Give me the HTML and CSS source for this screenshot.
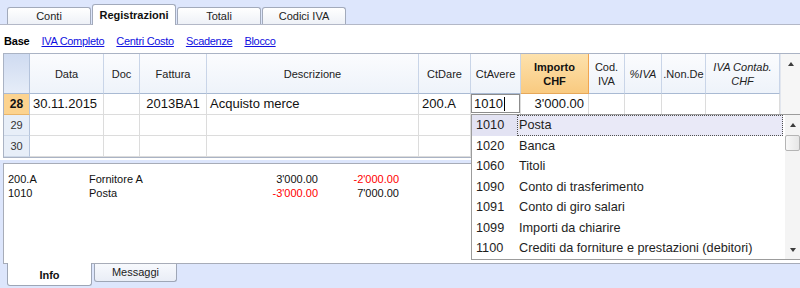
FILE: index.html
```html
<!DOCTYPE html>
<html>
<head>
<meta charset="utf-8">
<title>Registrazioni</title>
<link rel="stylesheet" href="styles.css">
</head>
<body>
<div class="app">
  <div class="tabs">
    <div class="tab">Conti</div>
    <div class="tab active">Registrazioni</div>
    <div class="tab">Totali</div>
    <div class="tab">Codici IVA</div>
  </div>

  <div class="main">
    <div class="views">
      <span class="view-cur">Base</span>
      <a class="view-link">IVA Completo</a>
      <a class="view-link">Centri Costo</a>
      <a class="view-link">Scadenze</a>
      <a class="view-link">Blocco</a>
    </div>

    <div class="gridwrap">
      <div class="grid">
        <div class="hc corner"></div>
        <div class="hc">Data</div>
        <div class="hc">Doc</div>
        <div class="hc">Fattura</div>
        <div class="hc">Descrizione</div>
        <div class="hc">CtDare</div>
        <div class="hc">CtAvere</div>
        <div class="hc hc-sel">Importo<br>CHF</div>
        <div class="hc">Cod.<br>IVA</div>
        <div class="hc it">%IVA</div>
        <div class="hc">.Non.De</div>
        <div class="hc it">IVA Contab.<br>CHF</div>

        <div class="rn rn-sel">28</div>
        <div class="c">30.11.2015</div>
        <div class="c"></div>
        <div class="c ctr">2013BA1</div>
        <div class="c">Acquisto merce</div>
        <div class="c">200.A</div>
        <div class="c edit-cell"><div class="edit">1010<span class="caret"></span></div></div>
        <div class="c num">3'000.00</div>
        <div class="c"></div>
        <div class="c"></div>
        <div class="c"></div>
        <div class="c"></div>

        <div class="rn">29</div>
        <div class="c"></div><div class="c"></div><div class="c"></div><div class="c"></div><div class="c"></div>
        <div class="c"></div><div class="c"></div><div class="c"></div><div class="c"></div><div class="c"></div><div class="c"></div>

        <div class="rn">30</div>
        <div class="c"></div><div class="c"></div><div class="c"></div><div class="c"></div><div class="c"></div>
        <div class="c"></div><div class="c"></div><div class="c"></div><div class="c"></div><div class="c"></div><div class="c"></div>
      </div>
      <div class="vscroll"><span class="arr-up"></span></div>
    </div>
  </div>

  <div class="info">
    <div class="info-row">
      <span>200.A</span><span>Fornitore A</span><span class="amt">3'000.00</span><span class="amt neg">-2'000.00</span>
    </div>
    <div class="info-row">
      <span>1010</span><span>Posta</span><span class="amt neg">-3'000.00</span><span class="amt">7'000.00</span>
    </div>
  </div>

  <div class="btabs">
    <div class="btab active">Info</div>
    <div class="btab">Messaggi</div>
  </div>

  <div class="dropdown">
    <div class="dd-list">
      <div class="dd-item sel"><span class="dd-code">1010</span><span class="dd-name">Posta</span></div>
      <div class="dd-item"><span class="dd-code">1020</span><span class="dd-name">Banca</span></div>
      <div class="dd-item"><span class="dd-code">1060</span><span class="dd-name">Titoli</span></div>
      <div class="dd-item"><span class="dd-code">1090</span><span class="dd-name">Conto di trasferimento</span></div>
      <div class="dd-item"><span class="dd-code">1091</span><span class="dd-name">Conto di giro salari</span></div>
      <div class="dd-item"><span class="dd-code">1099</span><span class="dd-name">Importi da chiarire</span></div>
      <div class="dd-item"><span class="dd-code">1100</span><span class="dd-name">Crediti da forniture e prestazioni (debitori)</span></div>
    </div>
    <div class="dd-scroll">
      <div class="sb-btn"><span class="arr-up"></span></div>
      <div class="sb-thumb"></div>
      <div class="sb-space"></div>
      <div class="sb-btn sb-btn-down"><span class="arr-down"></span></div>
    </div>
  </div>
</div>
</body>
</html>
```

FILE: styles.css
```css
* { box-sizing: border-box; margin: 0; padding: 0; }

html, body { width: 800px; height: 288px; overflow: hidden; }

body {
  background: #dde6fc;
  font-family: "Liberation Sans", Arial, sans-serif;
  font-size: 11px;
  color: #1c1c1c;
}

.app { position: relative; width: 800px; height: 288px; }

/* top tabs */
.tabs {
  display: flex;
  align-items: flex-end;
  gap: 1px;
  height: 25px;
  padding-left: 7px;
  border-bottom: 1px solid #b3b8c7;
}
.tab {
  width: 84px;
  height: 17px;
  border: 1px solid #a2aabb;
  border-bottom: none;
  border-radius: 3px 3px 0 0;
  background: linear-gradient(#ffffff, #eef1f7);
  text-align: center;
  line-height: 17px;
  color: #222;
}
.tab.active {
  position: relative;
  height: 21px;
  margin-bottom: -1px;
  background: #fff;
  font-weight: bold;
  line-height: 21px;
  color: #111;
}

/* main white area */
.main { background: #fff; height: 135px; }

.views {
  display: flex;
  gap: 12px;
  height: 28px;
  padding: 10px 0 0 4px;
  line-height: 13px;
}
.view-cur { font-weight: bold; color: #000; letter-spacing: -0.2px; }
.view-link { color: #1010e0; text-decoration: underline; letter-spacing: -0.3px; }

/* data grid */
.gridwrap {
  display: flex;
  width: 797px;
  margin-left: 3px;
  border: 1px solid #aab3c4;
  border-right: none;
}
.grid {
  display: grid;
  grid-template-columns: 26px 74px 36px 67px 212px 52px 50px 68px 36px 37px 44px 74px;
  grid-template-rows: 40px 21px 21px 21px;
}
.hc {
  display: flex;
  align-items: center;
  justify-content: center;
  text-align: center;
  line-height: 14px;
  background: linear-gradient(#fbfcfe, #eef3fa);
  border-right: 1px solid #c9d5e8;
  border-bottom: 1px solid #a9bad3;
  color: #222;
}
.hc.corner { background: linear-gradient(#cfdbf1, #e6edf8); border-right-color: #b4c3db; }
.hc.it { font-style: italic; }
.hc.hc-sel {
  background: linear-gradient(#fde2ad, #f9ca80);
  border-right: 1px solid #f1a550;
  border-bottom-color: #e6a85a;
  font-weight: bold;
  color: #111;
}
.rn {
  display: flex;
  align-items: center;
  justify-content: center;
  background: #e7eef8;
  border-right: 1px solid #b6c5dc;
  border-bottom: 1px solid #cdd8e8;
  color: #333;
}
.rn.rn-sel {
  background: #fcd38f;
  border-bottom-color: #e9b56a;
  font-weight: bold;
  font-size: 12px;
  color: #111;
}
.c {
  border-right: 1px solid #dcdcdc;
  border-bottom: 1px solid #dcdcdc;
  background: #fff;
  font-size: 13px;
  line-height: 20px;
  padding: 0 3px;
  white-space: nowrap;
  overflow: hidden;
  color: #111;
}
.c.ctr { text-align: center; }
.c.num { text-align: right; padding-right: 4px; }
.c.edit-cell { padding: 0; overflow: visible; }
.edit {
  height: 19px;
  border: 1px solid #8c8c8c;
  background: #fff;
  padding-left: 2px;
  line-height: 17px;
  display: flex;
  align-items: center;
}
.caret {
  display: inline-block;
  width: 1px;
  height: 14px;
  background: #000;
  margin-left: 1px;
}
.vscroll {
  width: 20px;
  background: #f6f6f6;
  border-left: 1px solid #e2e6ee;
  display: flex;
  justify-content: center;
  padding-top: 8px;
}

.arr-up, .arr-down {
  display: block;
  width: 0;
  height: 0;
  border-left: 3.5px solid transparent;
  border-right: 3.5px solid transparent;
}
.arr-up { border-bottom: 4px solid #3c3c3c; }
.arr-down { border-top: 4px solid #3c3c3c; }

/* info panel */
.info {
  margin: 3px 0 0 3px;
  height: 101px;
  border: 1px solid #a7acb8;
  border-right: none;
  background: #fff;
  padding: 8px 0 0 4px;
}
.info-row {
  display: grid;
  grid-template-columns: 81px 148px 81px 81px;
  line-height: 14px;
  color: #111;
}
.amt { text-align: right; }
.neg { color: #ff0000; }

/* bottom tabs */
.btabs { display: flex; gap: 2px; padding-left: 7px; align-items: flex-start; }
.btab {
  width: 83px;
  height: 18px;
  border: 1px solid #9ea6b6;
  border-top: none;
  border-radius: 0 0 3px 3px;
  background: linear-gradient(#f7f9fd, #e9edf6);
  text-align: center;
  line-height: 17px;
  color: #222;
}
.btab.active {
  width: 85px;
  height: 23px;
  margin-top: -1px;
  background: #fff;
  font-weight: bold;
  line-height: 24px;
  color: #111;
}

/* account dropdown */
.dropdown {
  position: absolute;
  left: 471px;
  top: 114px;
  width: 329px;
  height: 146px;
  border: 1px solid #9c9c9c;
  border-right: none;
  background: #fff;
  display: flex;
  gap: 2px;
}
.dd-list { width: 311px; }
.dd-item {
  display: flex;
  height: 20.5px;
  font-size: 12.7px;
  line-height: 20px;
  color: #1e1e1e;
  white-space: nowrap;
}
.dd-code { width: 45px; padding-left: 4px; }
.dd-name { flex: 1; padding-left: 2px; }
.dd-item.sel .dd-code { background: #e3e3f3; }
.dd-item.sel .dd-name {
  background: #e9e9f7;
  border: 1px dotted #505050;
  padding-left: 1px;
  line-height: 18px;
}
.dd-scroll {
  width: 15px;
  background: #f4f4f4;
  display: flex;
  flex-direction: column;
}
.sb-btn {
  height: 20px;
  display: flex;
  justify-content: center;
  align-items: center;
}
.sb-btn-down { height: 18px; }
.sb-thumb {
  height: 16px;
  border: 1px solid #b4b4b4;
  border-radius: 2px;
  background: linear-gradient(90deg, #f8f8f8, #e6e6e6);
}
.sb-space { flex: 1; }
```
